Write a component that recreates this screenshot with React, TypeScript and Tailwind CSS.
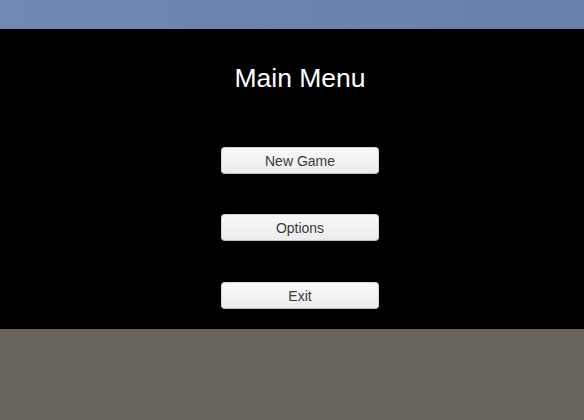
export default function App() {
  const btn =
    "w-[158px] h-[27px] rounded-[4px] border border-[#d4d4d4] border-b-[#bdbdbd] bg-gradient-to-b from-[#f8f8f8] to-[#ececec] text-[14px] leading-none text-[#3a3a3a] flex items-center justify-center";
  return (
    <div className="w-[584px] h-[420px] flex flex-col overflow-hidden" style={{ fontFamily: '"Liberation Sans", Arial, sans-serif' }}>
      <div className="h-[29px] bg-gradient-to-r from-[#7089b3] to-[#6780a9]" />
      <div className="h-[300px] bg-black flex flex-col items-center pl-[16px]">
        <div className="mt-[34px] text-[26.5px] leading-[30px] text-white">Main Menu</div>
        <div className="mt-[54px] flex flex-col">
          <div className={btn}>New Game</div>
          <div className={"mt-[40px] " + btn}>Options</div>
          <div className={"mt-[41px] " + btn}>Exit</div>
        </div>
      </div>
      <div className="flex-1 bg-[#6a645f]" />
    </div>
  );
}
